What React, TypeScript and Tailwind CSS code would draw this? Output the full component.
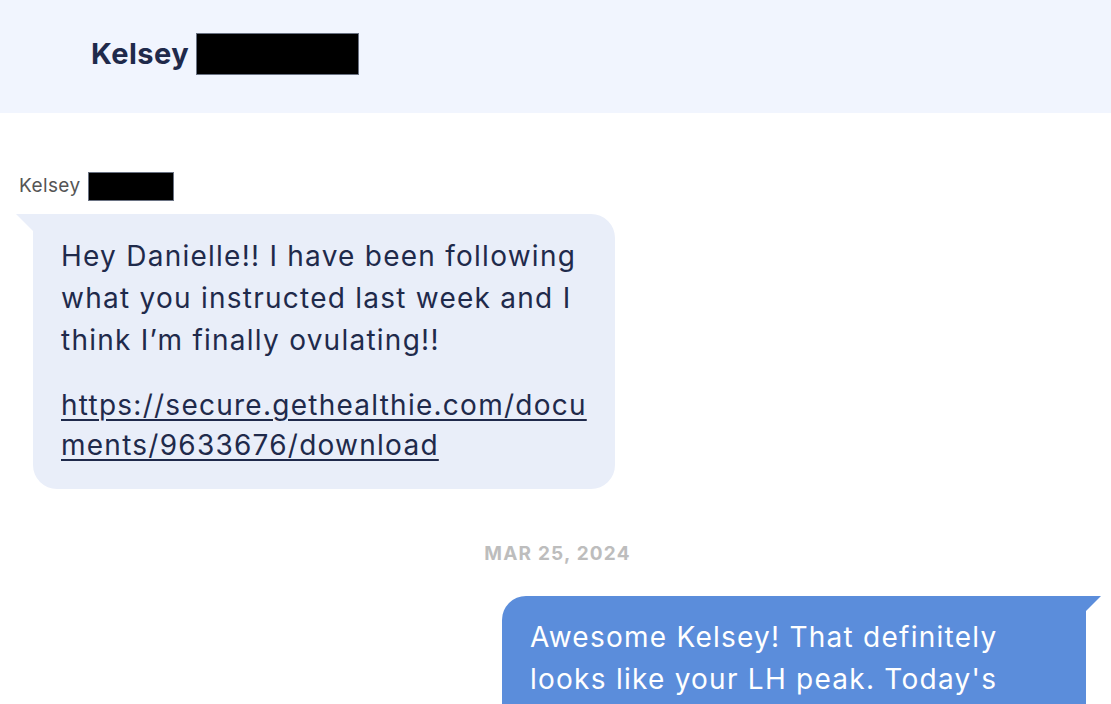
const font = { fontFamily: "Inter, 'Noto Sans', sans-serif" };

function Redacted({ className }: { className: string }) {
  return <span className={`inline-block border border-gray-500 bg-black ${className}`} />;
}

function IncomingBubble() {
  return (
    <div className="relative ml-[33px] w-[582px] rounded-[24px] rounded-tl-none bg-[#e9eef9] px-[28px] pb-[24px] pt-[21px] text-[28px] leading-[42px] tracking-[1.25px] text-[#1f2a4b]">
      {/* tail */}
      <span className="absolute left-[-17px] top-0 h-0 w-0 border-l-[17px] border-t-[17px] border-l-transparent border-t-[#e9eef9]" />
      <p>
        <span className="block whitespace-nowrap">Hey Danielle!! I have been following</span>
        <span className="block whitespace-nowrap">what you instructed last week and I</span>
        <span className="block whitespace-nowrap">think I’m finally ovulating!!</span>
      </p>
      <a href="#" className="mt-[24px] block leading-[40px] underline decoration-[1.5px] underline-offset-[4px]">
        <span className="block whitespace-nowrap">https://secure.gethealthie.com/docu</span>
        <span className="block whitespace-nowrap">ments/9633676/download</span>
      </a>
    </div>
  );
}

function OutgoingBubble() {
  return (
    <div className="relative ml-[502px] h-[160px] w-[584px] rounded-[24px] rounded-tr-none bg-[#5b8ddb] px-[28px] pt-[20px] text-[28px] leading-[42px] tracking-[1.25px] text-white">
      <span className="absolute right-[-15px] top-0 h-0 w-0 border-r-[15px] border-t-[15px] border-r-transparent border-t-[#5b8ddb]" />
      <span className="block whitespace-nowrap">Awesome Kelsey! That definitely</span>
      <span className="block whitespace-nowrap">looks like your LH peak. Today's</span>
    </div>
  );
}

export default function App() {
  return (
    <div className="h-[704px] w-full overflow-hidden bg-white" style={font}>
      <header className="flex h-[113px] items-center gap-[7px] bg-[#f1f5fe] pl-[91px] pb-[6px]">
        <h1 className="text-[29px] font-bold tracking-[0.5px] text-[#1f2a4b]">Kelsey</h1>
        <Redacted className="h-[42px] w-[163px]" />
      </header>

      <div className="pt-[59px]">
        <div className="flex items-center gap-[7px] pl-[19px] text-[19px] tracking-[0.4px] text-[#555]">
          <span>Kelsey</span>
          <Redacted className="h-[29px] w-[86px]" />
        </div>

        <div className="mt-[13px]">
          <IncomingBubble />
        </div>

        <p className="mt-[51px] pl-[4px] text-center text-[19px] font-bold tracking-[1.2px] text-[#bdbdbd]">
          MAR 25, 2024
        </p>

        <div className="mt-[27px]">
          <OutgoingBubble />
        </div>
      </div>
    </div>
  );
}
